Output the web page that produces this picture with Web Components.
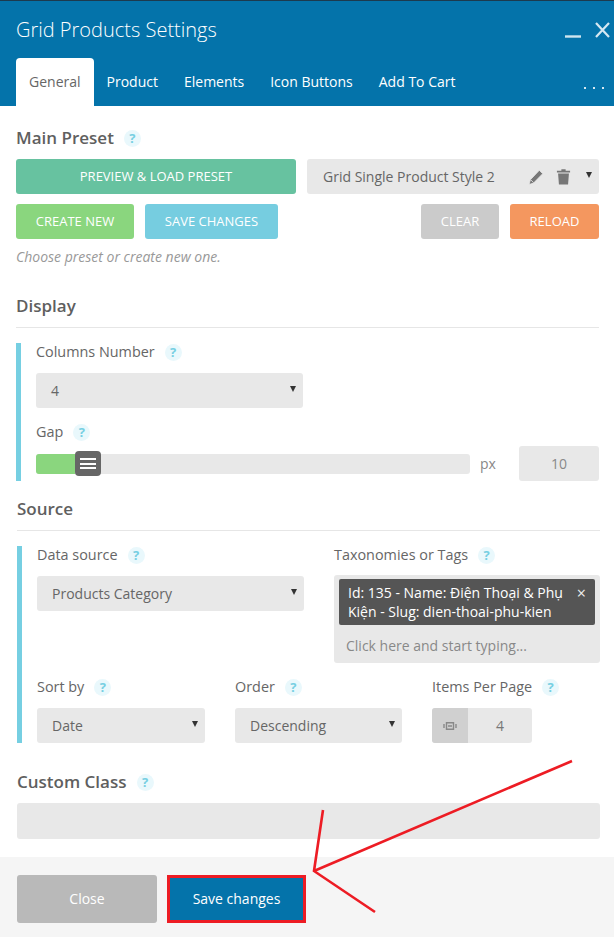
<!DOCTYPE html>
<html lang="en">
<head>
<meta charset="utf-8">
<title>Grid Products Settings</title>
<style>
  html, body { margin: 0; padding: 0; background: #fff; }
  body { font-family: "Open Sans", "Liberation Sans", sans-serif; color: #666; }
</style>
</head>
<body>
<settings-panel>
  <panel-header slot="header" heading="Grid Products Settings">
    <panel-tab active>General</panel-tab>
    <panel-tab>Product</panel-tab>
    <panel-tab>Elements</panel-tab>
    <panel-tab>Icon Buttons</panel-tab>
    <panel-tab>Add To Cart</panel-tab>
  </panel-header>

  <preset-block></preset-block>

  <section-title ruled style="margin-top:29px">Display</section-title>
  <accent-group style="margin-top:15px">
    <field-label>Columns Number</field-label>
    <select-box value="4" style="width:267px;margin-top:12px"></select-box>
    <field-label style="margin-top:15px">Gap</field-label>
    <gap-slider value="10" percent="9" style="margin-top:5px"></gap-slider>
  </accent-group>

  <source-block></source-block>

  <section-title help style="margin:28px -1px 0 1px">Custom Class</section-title>
  <text-box style="margin:10px -1px 0 1px"></text-box>

  <panel-footer slot="footer"></panel-footer>
  <annotation-arrow slot="overlay"></annotation-arrow>
</settings-panel>

<script>
const FONT = `"Open Sans", "Liberation Sans", sans-serif`;

// small helper, every element below just sets its shadow markup once
class Base extends HTMLElement {
  constructor() {
    super();
    this.attachShadow({ mode: 'open' });
  }
  connectedCallback() {
    this.render();
  }
}

class SettingsPanel extends Base {
  render() {
    this.shadowRoot.innerHTML = `
      <style>
        :host { display: flex; flex-direction: column; position: relative; width: 614px; height: 937px; overflow: hidden; background: #fff; font-family: ${FONT}; }
        main { padding: 0 15px 0 16px; flex: 1; }
      </style>
      <slot name="header"></slot>
      <main><slot></slot></main>
      <slot name="footer"></slot>
      <slot name="overlay"></slot>`;
  }
}

class PanelHeader extends Base {
  render() {
    const heading = this.getAttribute('heading') || '';
    this.shadowRoot.innerHTML = `
      <style>
        :host { display: block; height: 105px; background: #0473aa; border-top: 1px solid #1c3a4e; position: relative; }
        .top { height: 57px; display: flex; align-items: center; justify-content: space-between; padding: 0 4px 0 16px; }
        h1 { margin: 1px 0 0; font: 300 20px/28px ${FONT}; color: #fff; }
        .win { display: flex; align-items: flex-start; gap: 14px; margin-top: 1px; }
        svg { display: block; }
        nav { display: flex; padding-left: 16px; height: 48px; }
        .more { position: absolute; right: 10px; bottom: 17px; display: flex; gap: 7px; }
        .more i { width: 2px; height: 2px; background: #d5e8f2; }
      </style>
      <div class="top">
        <h1>${heading}</h1>
        <div class="win">
          <svg width="16" height="16" viewBox="0 0 16 16"><path d="M0 14.5h16" stroke="#cfe5f0" stroke-width="2.4"/></svg>
          <svg width="15" height="16" viewBox="0 0 15 16"><path d="M1 1l13 14M14 1L1 15" stroke="#d5e8f2" stroke-width="2.2" fill="none"/></svg>
        </div>
      </div>
      <nav><slot></slot></nav>
      <div class="more"><i></i><i></i><i></i></div>`;
  }
}

class PanelTab extends Base {
  render() {
    this.shadowRoot.innerHTML = `
      <style>
        :host { display: flex; align-items: center; padding: 0 13px; font: 400 14px/20px ${FONT}; color: #fff; border-radius: 4px 4px 0 0; }
        :host([active]) { background: #fff; color: #666; }
      </style>
      <slot></slot>`;
  }
}

class HelpBadge extends Base {
  render() {
    this.shadowRoot.innerHTML = `
      <style>
        :host { display: inline-flex; flex: none; align-items: center; justify-content: center; width: 17px; height: 17px; border-radius: 50%; background: #e9f8fc; color: #76cfe2; font: 700 13px/17px ${FONT}; margin-left: 10px; }
      </style>?`;
  }
}

class SectionTitle extends Base {
  render() {
    const help = this.hasAttribute('help') ? '<help-badge></help-badge>' : '';
    this.shadowRoot.innerHTML = `
      <style>
        :host { display: flex; align-items: center; height: 22px; font: 600 17px/22px ${FONT}; color: #5f5f5f; }
        :host([ruled]) { padding-bottom: 10px; border-bottom: 1px solid #e6e6e6; }
      </style>
      <slot></slot>${help}`;
  }
}

class FieldLabel extends Base {
  render() {
    this.shadowRoot.innerHTML = `
      <style>
        :host { display: flex; align-items: center; height: 18px; font: 400 14.4px/18px ${FONT}; color: #666; white-space: nowrap; }
      </style>
      <slot></slot><help-badge></help-badge>`;
  }
}

class AccentGroup extends Base {
  render() {
    this.shadowRoot.innerHTML = `
      <style>
        :host { display: block; border-left: 5px solid #76cfe2; padding-left: 15px; }
      </style>
      <slot></slot>`;
  }
}

class SelectBox extends Base {
  render() {
    this.shadowRoot.innerHTML = `
      <style>
        :host { display: flex; align-items: center; box-sizing: border-box; height: 35px; background: #e8e8e8; border-radius: 3px; padding: 0 7px 0 15px; font: 400 14px/20px ${FONT}; color: #666; white-space: nowrap; }
        span { flex: 1; padding-top: 1px; }
        i { width: 0; height: 0; border: 3.5px solid transparent; border-top: 6px solid #333; border-bottom: 0; margin-top: -3px; }
        ::slotted(svg) { margin-right: 13px; }
      </style>
      <span>${this.getAttribute('value') || ''}</span><slot></slot><i></i>`;
  }
}

class ActionButton extends Base {
  render() {
    this.shadowRoot.innerHTML = `
      <style>
        :host { display: flex; align-items: center; justify-content: center; box-sizing: border-box; height: 35px; padding-bottom: 1px; border-radius: 3px; font: 400 13px/16px ${FONT}; color: #fff; background: var(--bg, #ccc); white-space: nowrap; }
      </style>
      <slot></slot>`;
  }
}

class TextBox extends Base {
  render() {
    this.shadowRoot.innerHTML = `
      <style>
        :host { display: block; height: 36px; background: #e8e8e8; border-radius: 3px; }
      </style>`;
  }
}

class GapSlider extends Base {
  render() {
    this.shadowRoot.innerHTML = `
      <style>
        :host { display: flex; align-items: center; height: 35px; font: 400 14px/20px ${FONT}; color: #888; }
        .track { position: relative; width: 434px; height: 20px; margin-top: 1px; background: #e8e8e8; border-radius: 3px; }
        .fill { width: 39px; height: 100%; background: #8ad67e; border-radius: 3px 0 0 3px; }
        .knob { position: absolute; left: 39px; top: -3px; box-sizing: border-box; width: 26px; height: 25px; padding: 7px 5px; background: #666; border-radius: 4px; display: flex; flex-direction: column; justify-content: space-between; }
        .knob i { height: 2px; background: #fff; }
        .unit { margin-left: 10px; width: 39px; }
        .val { width: 80px; height: 35px; display: flex; align-items: center; justify-content: center; background: #e8e8e8; border-radius: 3px; }
      </style>
      <div class="track"><div class="fill"></div><div class="knob"><i></i><i></i><i></i></div></div>
      <span class="unit">px</span>
      <span class="val">${this.getAttribute('value')}</span>`;
  }
}

class PresetBlock extends Base {
  render() {
    this.shadowRoot.innerHTML = `
      <style>
        :host { display: block; padding-top: 21px; }
        .row { display: flex; gap: 11px; margin-top: 10px; }
        .push { margin-left: auto; }
        p { margin: 9px 0 0; font: italic 400 14px/18px ${FONT}; color: #999; }
        svg { flex: none; }
      </style>
      <section-title help>Main Preset</section-title>
      <div class="row">
        <action-button style="width:280px;--bg:#67c2a0">PREVIEW &amp; LOAD PRESET</action-button>
        <select-box value="Grid Single Product Style 2" style="width:292px;padding-left:16px">
          <svg width="16" height="16" viewBox="0 0 15 15" style="margin-right:12px"><path d="M10.6 1.2l3.2 3.2-8.6 8.8-4.2 1.4 1.2-4.5zM2.9 10.4l2.3 2.4" fill="#777" stroke="#e8e8e8" stroke-width=".8"/></svg>
          <svg width="15" height="17" viewBox="0 0 14 16" style="margin-right:15px"><path d="M5 1.2h4v1.3h4.2v1.8H.8V2.5H5zM1.9 5.2h10.2l-.8 10.3H2.7z" fill="#777"/></svg>
        </select-box>
      </div>
      <div class="row">
        <action-button style="width:118px;--bg:#8ad67e">CREATE NEW</action-button>
        <action-button style="width:133px;--bg:#76cde0">SAVE CHANGES</action-button>
        <action-button class="push" style="width:78px;--bg:#cbcbcb">CLEAR</action-button>
        <action-button style="width:89px;--bg:#f4975f">RELOAD</action-button>
      </div>
      <p>Choose preset or create new one.</p>`;
  }
}

class TagInput extends Base {
  render() {
    this.shadowRoot.innerHTML = `
      <style>
        :host { display: block; box-sizing: border-box; height: 88px; background: #e8e8e8; border-radius: 3px; padding: 4px 5px 0; font: 400 14px/20px ${FONT}; }
        .chip { position: relative; box-sizing: border-box; height: 46px; background: #555; border-radius: 2px; color: #fff; padding: 4px 30px 0 9px; line-height: 19px; }
        .chip b { position: absolute; right: 9px; top: 5px; font: 400 16px/18px ${FONT}; color: #eee; }
        .hint { padding: 11px 0 0 7px; color: #888; }
      </style>
      <div class="chip">Id: 135 - Name: Điện Thoại &amp; Phụ Kiện - Slug: dien-thoai-phu-kien<b>×</b></div>
      <div class="hint">Click here and start typing...</div>`;
  }
}

class SourceBlock extends Base {
  render() {
    this.shadowRoot.innerHTML = `
      <style>
        :host { display: block; margin: 17px -1px 0 1px; }
        .top { display: flex; }
        .left { width: 267px; margin-right: 30px; }
        .right { flex: 1; }
        .bottom { display: flex; gap: 30px; margin-top: 15px; }
        select-box { margin-top: 12px; }
        tag-input { margin-top: 11px; }
        .count { display: flex; width: 100px; height: 35px; margin-top: 12px; background: #e8e8e8; border-radius: 3px; overflow: hidden; font: 400 14px/35px ${FONT}; color: #777; }
        .count span { flex: 1; text-align: center; }
        .count div { width: 36px; background: #d0d0d0; display: flex; align-items: center; justify-content: center; }
      </style>
      <section-title ruled>Source</section-title>
      <accent-group style="margin-top:15px">
        <div class="top">
          <div class="left">
            <field-label>Data source</field-label>
            <select-box value="Products Category"></select-box>
          </div>
          <div class="right">
            <field-label>Taxonomies or Tags</field-label>
            <tag-input></tag-input>
          </div>
        </div>
        <div class="bottom">
          <div style="width:168px">
            <field-label>Sort by</field-label>
            <select-box value="Date"></select-box>
          </div>
          <div style="width:167px">
            <field-label>Order</field-label>
            <select-box value="Descending"></select-box>
          </div>
          <div style="width:100px">
            <field-label>Items Per Page</field-label>
            <div class="count">
              <div><svg width="14" height="8" viewBox="0 0 14 8"><path d="M3.5 .7h7v6.6h-7zM5 4h4" fill="none" stroke="#888" stroke-width="1.4"/><path d="M1 2v4M13 2v4" stroke="#888" stroke-width="1.4"/></svg></div>
              <span>4</span>
            </div>
          </div>
        </div>
      </accent-group>`;
  }
}

class PanelFooter extends Base {
  render() {
    this.shadowRoot.innerHTML = `
      <style>
        :host { display: flex; gap: 10px; box-sizing: border-box; height: 80px; padding: 18px 0 0 17px; background: #f5f5f5; }
        div { display: flex; align-items: center; justify-content: center; box-sizing: border-box; height: 48px; border-radius: 3px; font: 400 14px/20px ${FONT}; color: #fff; }
        .close { width: 140px; background: #b9b9b9; }
        .save { width: 139px; background: #0473aa; border: 3px solid #ed1c24; border-radius: 0; font-weight: 500; }
      </style>
      <div class="close">Close</div>
      <div class="save">Save changes</div>`;
  }
}

// red arrow someone drew over the screenshot, so it sits on top of everything
class AnnotationArrow extends Base {
  render() {
    this.shadowRoot.innerHTML = `
      <style>
        :host { position: absolute; left: 0; top: 0; width: 614px; height: 937px; pointer-events: none; }
        svg { display: block; }
      </style>
      <svg width="614" height="937" viewBox="0 0 614 937">
        <path d="M572 761L314 871M323 810L314 871L375 912" fill="none" stroke="#ed1c24" stroke-width="2.6"/>
      </svg>`;
  }
}

customElements.define('settings-panel', SettingsPanel);
customElements.define('panel-header', PanelHeader);
customElements.define('panel-tab', PanelTab);
customElements.define('help-badge', HelpBadge);
customElements.define('section-title', SectionTitle);
customElements.define('field-label', FieldLabel);
customElements.define('accent-group', AccentGroup);
customElements.define('select-box', SelectBox);
customElements.define('action-button', ActionButton);
customElements.define('text-box', TextBox);
customElements.define('gap-slider', GapSlider);
customElements.define('preset-block', PresetBlock);
customElements.define('tag-input', TagInput);
customElements.define('source-block', SourceBlock);
customElements.define('panel-footer', PanelFooter);
customElements.define('annotation-arrow', AnnotationArrow);
</script>
</body>
</html>
